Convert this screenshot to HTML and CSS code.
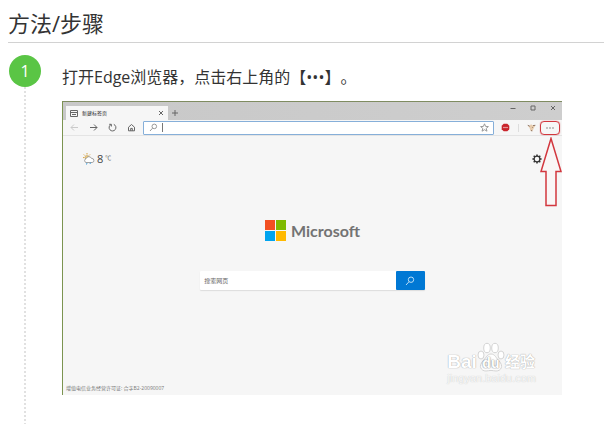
FILE: index.html
```html
<!DOCTYPE html>
<html lang="zh-CN">
<head>
  <meta charset="UTF-8">
  <meta name="viewport" content="width=device-width, initial-scale=1.0">
  <title>方法/步骤</title>
  <link rel="stylesheet" href="styles.css">
</head>
<body>

  <h2 class="section-title">方法/步骤</h2>

  <ol class="steps">
    <li class="step">
      <div class="step-marker">
        <span class="step-number">1</span>
        <span class="step-line"></span>
      </div>

      <div class="step-content">
        <p class="step-text">打开Edge浏览器，点击右上角的【•••】。</p>

        <div class="browser">
          <div class="tab-bar">
            <div class="tab">
              <svg class="tab-icon" viewBox="0 0 8 7"><path d="M.5 .5h7v6h-7zM.5 2.5h7M2 4.5h4" /></svg>
              <span class="tab-title">新建标签页</span>
              <button class="icon-btn tab-close" aria-label="关闭标签页"><svg viewBox="0 0 6 6"><path d="M1 1l4 4M5 1L1 5" /></svg></button>
            </div>
            <button class="icon-btn new-tab" aria-label="新建标签页"><svg viewBox="0 0 8 8"><path d="M4 1v6M1 4h6" /></svg></button>
            <div class="window-buttons">
              <button class="icon-btn" aria-label="最小化"><svg viewBox="0 0 8 8"><path d="M1.5 4.5h5" /></svg></button>
              <button class="icon-btn" aria-label="最大化"><svg viewBox="0 0 8 8"><path d="M2 2h4v4H2z" /></svg></button>
              <button class="icon-btn" aria-label="关闭"><svg viewBox="0 0 8 8"><path d="M2 2l4 4M6 2L2 6" /></svg></button>
            </div>
          </div>

          <div class="toolbar">
            <div class="nav-buttons">
              <button class="icon-btn faded" aria-label="后退"><svg viewBox="0 0 9 9"><path d="M8 4.5H1M4 1.5l-3 3 3 3" /></svg></button>
              <button class="icon-btn" aria-label="前进"><svg viewBox="0 0 9 9"><path d="M1 4.5h7M5 1.5l3 3-3 3" /></svg></button>
              <button class="icon-btn" aria-label="刷新"><svg viewBox="0 0 9 9"><path d="M5.8 1.4A3.4 3.4 0 1 1 3 1.5M1.2 1.3h2.2v2.2" /></svg></button>
              <button class="icon-btn" aria-label="主页"><svg viewBox="0 0 9 9"><path d="M1.5 4.2l3-2.7 3 2.7v3.6h-6zM3.7 7.8V5.4h1.6v2.4" /></svg></button>
            </div>
            <label class="address">
              <svg class="search-icon" viewBox="0 0 9 9"><circle cx="5.3" cy="3.4" r="2.3" /><path d="M3.6 5.1L1 8" /></svg>
              <span class="caret"></span>
              <input class="address-input" type="text" aria-label="地址栏">
              <svg class="star-icon" viewBox="0 0 9 9"><path d="M4.5 .8l1.1 2.6 2.8.2-2.2 1.8.8 2.8-2.5-1.5L2 8.2l.8-2.8L.6 3.6l2.8-.2z" /></svg>
            </label>
            <div class="extensions">
              <svg class="abp-icon" viewBox="0 0 9 9"><path d="M2.7.8h3.6l2 2v3.4l-2 2H2.7l-2-2V2.8z" fill="#c9252c" /><path d="M2 4.5h5" stroke="#e59396" stroke-width="1.2" /></svg>
              <span class="divider"></span>
              <svg class="avatar-icon" viewBox="0 0 9 9"><path d="M.5 2.3L2.7 3l1.2-1.7L6 2.5l2.5-.3L7 4.8 5.4 8.2 3.5 8 2.5 4.7z" fill="#e6cbad" /><path d="M.8 2.3l2 .9M6 2.6l2.3-.3M5.6 4.4l-.6.6M4 7.5l1.2.4" stroke="#765b4c" stroke-width=".8" fill="none" /></svg>
              <button class="more-btn" aria-label="设置及其他"><svg viewBox="0 0 10 4"><circle cx="2" cy="2" r=".7" /><circle cx="5" cy="2" r=".7" /><circle cx="8" cy="2" r=".7" /></svg></button>
            </div>
          </div>

          <div class="new-tab-page">
            <div class="page-top">
              <div class="weather">
                <svg class="weather-icon" viewBox="0 0 12 12">
                  <path d="M4 0v1.5M.8 1.5l1 1M0 4.6h1.5M7 1.5l-1 1" stroke="#d9a441" fill="none" />
                  <circle cx="4" cy="4.4" r="2" fill="#f3cc76" stroke="#b69b60" stroke-width=".5" />
                  <path d="M3 9.5a2 2 0 0 1 0-3.8 3 3 0 0 1 5.6-.2 2 2 0 0 1 .6 4z" fill="#fff" stroke="#8b8b8b" stroke-width=".8" />
                  <path d="M4 10l-.5 1.5M7.5 9.6L7 11" stroke="#3f9fdb" fill="none" />
                </svg>
                <span class="temperature">8</span>
                <span class="unit">℃</span>
              </div>
              <svg class="gear-icon" viewBox="0 0 10 10"><circle cx="5" cy="5" r="2.9" stroke-width="1.3" /><path d="M5 .4v1.7M5 7.9v1.7M.4 5h1.7M7.9 5h1.7M1.7 1.7L3 3M7 7l1.3 1.3M8.3 1.7L7 3M3 7L1.7 8.3" stroke-width="1.5" /></svg>
            </div>

            <div class="logo">
              <svg class="logo-mark" viewBox="0 0 21 21">
                <path fill="#f25022" d="M0 0h10v10H0z" />
                <path fill="#7fba00" d="M11 0h10v10H11z" />
                <path fill="#00a4ef" d="M0 11h10v10H0z" />
                <path fill="#ffb900" d="M11 11h10v10H11z" />
              </svg>
              <span class="logo-text">Microsoft</span>
            </div>

            <div class="search">
              <input class="search-input" type="text" placeholder="搜索网页" aria-label="搜索网页">
              <button class="search-btn" aria-label="搜索"><svg viewBox="0 0 10 10"><circle cx="6" cy="3.7" r="2.7" /><path d="M4.1 5.6L1 9" /></svg></button>
            </div>

            <p class="license">增值电信业务经营许可证: 合字B2-20090007</p>
          </div>

          <svg class="arrow" viewBox="0 0 22 70"><path d="M11 1.5L1 34.5h5v34h10v-34h5z" /></svg>

          <div class="watermark">
            <div class="watermark-name">
              <span>Bai</span>
              <span class="paw">
                <svg viewBox="0 0 28 30">
                  <ellipse cx="4" cy="13" rx="3" ry="4" />
                  <ellipse cx="10" cy="6" rx="3.3" ry="4.7" />
                  <ellipse cx="18" cy="6" rx="3.3" ry="4.7" />
                  <ellipse cx="24" cy="13" rx="3" ry="4" />
                  <path d="M14 12c4 0 5 4 8 7 5 5 2 10-3 10-2 0-3-.6-5-.6S11 29 9 29c-5 0-8-5-3-10 3-3 4-7 8-7z" />
                </svg>
                <span class="paw-text">du</span>
              </span>
              <span class="watermark-cn">经验</span>
            </div>
            <div class="watermark-url">jingyan.baidu.com</div>
          </div>
        </div>
      </div>
    </li>
  </ol>

</body>
</html>
```
FILE: styles.css
```css
* {
  box-sizing: border-box;
}

body {
  margin: 0;
  padding: 6px 0 0 8px;
  background: #fff;
  color: #333;
  font-family: "Open Sans", "Noto Sans CJK SC", sans-serif;
  text-spacing-trim: space-all;
}

button,
input {
  margin: 0;
  padding: 0;
  border: 0;
  background: none;
  font-family: inherit;
}

p {
  margin: 0;
}

svg {
  display: block;
  flex: none;
}

.section-title {
  margin: 0;
  padding-bottom: 2px;
  border-bottom: 1px solid #d2d2d2;
  font-size: 22px;
  font-weight: 400;
  line-height: 34px;
}

.steps {
  margin: 0;
  padding: 12px 0 0;
  list-style: none;
}

.step {
  display: flex;
  gap: 20px;
  min-height: calc(100vh - 55px);
}

.step-marker {
  display: flex;
  flex-direction: column;
  align-items: center;
  width: 34px;
}

.step-number {
  width: 32px;
  height: 32px;
  border-radius: 50%;
  background: #5ac545;
  color: #fff;
  font-size: 16px;
  line-height: 32px;
  text-align: center;
}

.step-line {
  flex: 1;
  width: 2px;
  background: repeating-linear-gradient(#e1e1e1 0 2px, #fff 2px 4px);
}

.step-content {
  flex: 1;
  min-width: 0;
  padding-top: 8px;
}

.step-text {
  margin-bottom: 10px;
  font-size: 16px;
  line-height: 28px;
}

/* browser window */
.browser {
  position: relative;
  display: flex;
  flex-direction: column;
  max-width: 500px;
  aspect-ratio: 500 / 294;
  border-top: 1px solid #7f8c61;
  border-left: 1px solid #7c9450;
  background: #f6f6f6;
}

.icon-btn {
  display: flex;
  align-items: center;
  justify-content: center;
}

.icon-btn svg,
.search-icon,
.star-icon,
.tab-icon {
  width: 9px;
  height: 9px;
  fill: none;
  stroke: #666;
  stroke-width: 1;
}

.tab-bar {
  display: flex;
  align-items: flex-end;
  height: 18px;
  padding-left: 3px;
  background: linear-gradient(to right, #c8c8c8, #cecece);
}

.tab {
  display: flex;
  align-items: center;
  gap: 4px;
  width: 102px;
  height: 14px;
  padding: 0 4px;
  background: #f6f6f6;
}

.tab-icon {
  width: 8px;
  height: 7px;
}

.tab-title {
  flex: 1;
  color: #222;
  font-size: 5px;
  line-height: 8px;
}

.tab-close svg {
  width: 6px;
  height: 6px;
}

.new-tab {
  width: 14px;
  height: 14px;
}

.new-tab svg,
.window-buttons svg {
  width: 8px;
  height: 8px;
}

.window-buttons {
  display: flex;
  align-self: flex-start;
  gap: 12px;
  margin-left: auto;
  padding: 2px 5px 0 0;
}

.toolbar {
  display: flex;
  align-items: center;
  height: 16px;
  border-bottom: 1px solid #e4e4e4;
}

.nav-buttons {
  display: flex;
  gap: 10px;
  padding: 0 7px 0 7px;
}

.faded {
  opacity: 0.3;
}

.address {
  display: flex;
  flex: 1;
  align-items: center;
  gap: 4px;
  min-width: 0;
  height: 14px;
  padding: 0 4px 0 5px;
  border: 1px solid #86afd9;
  border-radius: 1px;
  background: #fff;
}

.search-icon,
.star-icon {
  stroke: #999;
}

.caret {
  width: 1px;
  height: 9px;
  background: #777;
}

.address-input {
  flex: 1;
  min-width: 0;
  font-size: 6px;
  outline: none;
}

.extensions {
  display: flex;
  align-items: center;
  gap: 8px;
  padding: 0 2px 0 7px;
}

.abp-icon,
.avatar-icon {
  width: 9px;
  height: 9px;
}

.divider {
  width: 1px;
  height: 8px;
  background: #ddd;
}

.more-btn {
  display: flex;
  align-items: center;
  justify-content: center;
  width: 20px;
  height: 14px;
  margin-left: -4px;
  border: 1px solid #d2373e;
  border-radius: 4px;
  box-shadow: 0 0 1px #d2373e;
}

.more-btn svg {
  width: 10px;
  height: 4px;
  fill: #666;
}

.new-tab-page {
  display: flex;
  flex: 1;
  flex-direction: column;
  align-items: center;
}

.page-top {
  display: flex;
  align-items: center;
  justify-content: space-between;
  width: 100%;
  padding: 16px 20px 0;
}

.weather {
  display: flex;
  align-items: center;
  gap: 2px;
}

.weather-icon {
  width: 12px;
  height: 12px;
}

.temperature {
  color: #444;
  font-size: 11px;
  line-height: 14px;
}

.unit {
  align-self: flex-start;
  color: #666;
  font-size: 6px;
  line-height: 12px;
}

.gear-icon {
  width: 10px;
  height: 10px;
  fill: none;
  stroke: #333;
}

.logo {
  display: flex;
  align-items: center;
  gap: 5px;
  margin-top: 54px;
}

.logo-mark {
  width: 21px;
  height: 21px;
}

.logo-text {
  color: #737373;
  font-family: Lato, "Open Sans", sans-serif;
  font-size: 16px;
  font-weight: 700;
  line-height: 21px;
}

.search {
  display: flex;
  width: 45%;
  height: 19px;
  margin-top: 30px;
  border-radius: 1px;
  background: #fff;
  box-shadow: 0 1px 1px #ddd;
}

.search-input {
  flex: 1;
  min-width: 0;
  padding-left: 4px;
  color: #555;
  font-size: 6px;
  outline: none;
}

.search-input::placeholder {
  color: #666;
}

.search-btn {
  display: flex;
  align-items: center;
  justify-content: center;
  width: 29px;
  border-radius: 1px;
  background: #0078d4;
}

.search-btn svg {
  width: 10px;
  height: 10px;
  fill: none;
  stroke: #b9dcf5;
}

.license {
  align-self: flex-start;
  margin-top: auto;
  padding: 0 0 3px 3px;
  color: #777;
  font-size: 5px;
  line-height: 8px;
}

/* red arrow that points at the menu button */
.arrow {
  position: absolute;
  top: 35px;
  right: 0;
  width: 22px;
  height: 70px;
  fill: #f9f6f6;
  stroke: #d2373e;
  stroke-width: 1.5;
}

.watermark {
  position: absolute;
  right: 26px;
  bottom: 11px;
  color: #fff;
  font-family: "Liberation Sans", "Noto Sans CJK SC", sans-serif;
  text-shadow: 0 0 1px #aaa, 0 0 1px #bbb;
}

.watermark-name {
  display: flex;
  align-items: flex-end;
  font-size: 19px;
  font-weight: 700;
  line-height: 20px;
}

.paw {
  position: relative;
  width: 28px;
  height: 30px;
}

.paw svg {
  width: 28px;
  height: 30px;
  fill: #fff;
  stroke: #d4d4d4;
  stroke-width: 1;
}

.paw-text {
  position: absolute;
  right: 0;
  bottom: 0;
  left: 0;
  font-size: 14px;
  line-height: 17px;
  text-align: center;
  text-shadow: 0 0 1px #888, 0 0 2px #999;
}

.watermark-cn {
  font-size: 15px;
}

.watermark-url {
  color: #f8f8f8;
  font-size: 11px;
  line-height: 12px;
  text-shadow: 0 0 1px #bbb;
}
```
